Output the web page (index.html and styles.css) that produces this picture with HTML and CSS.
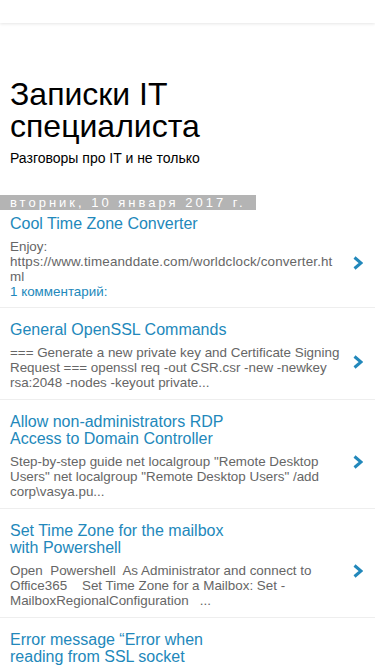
FILE: index.html
```html
<!DOCTYPE html>
<html lang="ru">

<head>
    <meta charset="UTF-8">
    <meta name="viewport" content="width=device-width, initial-scale=1.0">
    <title>Записки IT специалиста</title>

    <link rel="stylesheet" href="styles.css">
</head>

<body>

    <div class="topbar"></div>

    <header class="blog-header">
        <h1>Записки IT специалиста</h1>
        <p class="description">Разговоры про IT и не только</p>
    </header>

    <div class="date-header"><span>вторник, 10 января 2017 г.</span></div>

    <div class="post first">
        <div class="post-body">
            <h3 class="post-title">Cool Time Zone Converter</h3>
            <div class="snippet">Enjoy:<br><span class="url">https://www.timeanddate.com/worldclock/converter.html</span></div>
            <div class="comments">1 комментарий:</div>
        </div>
        <div class="arrow"><svg width="10" height="14" viewBox="0 0 10 14"><polyline points="1.5,1.5 8,7 1.5,12.5" fill="none" stroke="#2288bb" stroke-width="3"/></svg></div>
    </div>

    <div class="post">
        <div class="post-body">
            <h3 class="post-title">General OpenSSL Commands</h3>
            <div class="snippet">=== Generate a new private key and Certificate Signing Request === openssl req -out CSR.csr -new -newkey rsa:2048 -nodes -keyout private...</div>
        </div>
        <div class="arrow"><svg width="10" height="14" viewBox="0 0 10 14"><polyline points="1.5,1.5 8,7 1.5,12.5" fill="none" stroke="#2288bb" stroke-width="3"/></svg></div>
    </div>

    <div class="post">
        <div class="post-body">
            <h3 class="post-title">Allow non-administrators RDP Access to Domain Controller</h3>
            <div class="snippet">Step-by-step guide net localgroup "Remote Desktop Users" net localgroup "Remote Desktop Users" /add corp\vasya.pu...</div>
        </div>
        <div class="arrow"><svg width="10" height="14" viewBox="0 0 10 14"><polyline points="1.5,1.5 8,7 1.5,12.5" fill="none" stroke="#2288bb" stroke-width="3"/></svg></div>
    </div>

    <div class="post">
        <div class="post-body">
            <h3 class="post-title">Set Time Zone for the mailbox with Powershell</h3>
            <div class="snippet">Open&nbsp; Powershell&nbsp; As Administrator and connect to Office365 &nbsp;&nbsp; Set Time Zone for a Mailbox: Set -MailboxRegionalConfiguration &nbsp; ...</div>
        </div>
        <div class="arrow"><svg width="10" height="14" viewBox="0 0 10 14"><polyline points="1.5,1.5 8,7 1.5,12.5" fill="none" stroke="#2288bb" stroke-width="3"/></svg></div>
    </div>

    <div class="post">
        <div class="post-body">
            <h3 class="post-title">Error message “Error when reading from SSL socket connection” when sending mail</h3>
        </div>
    </div>

</body>

</html>
```

FILE: styles.css
```css
body {
    margin: 0;
    background-color: white;
    font-family: "Liberation Sans", Arial, sans-serif;
    color: #222;
}

.topbar {
    height: 23px;
    background-color: white;
    box-shadow: 0 1px 3px rgba(0, 0, 0, 0.1);
}

.blog-header {
    padding: 55px 10px 0;
}

h1 {
    margin: 0;
    max-width: 260px;
    font-size: 32px;
    font-weight: normal;
    line-height: 32px;
    color: black;
}

.description {
    margin: 8px 0 0;
    font-size: 14px;
    line-height: 16px;
    color: black;
}

.date-header {
    margin-top: 27px;
    height: 15px;
}

.date-header span {
    display: inline-block;
    background-color: #b4b4b4;
    color: white;
    font-size: 13px;
    line-height: 15px;
    letter-spacing: 3px;
    padding: 0 10px;
}

.post {
    display: flex;
    align-items: center;
    padding: 13px 0 9px 10px;
    border-bottom: 1px solid #eee;
}

.post.first {
    padding-top: 7px;
    padding-bottom: 8px;
}

.post-body {
    width: 333px;
}

.post-title {
    margin: 0 0 7px;
    max-width: 240px;
    font-size: 16px;
    line-height: 17px;
    font-weight: normal;
    color: #2288bb;
}

.snippet {
    font-size: 13.4px;
    line-height: 15px;
    color: #666;
    overflow-wrap: break-word;
}

.url {
    letter-spacing: 0.15px;
}

.comments {
    font-size: 13.4px;
    line-height: 15px;
    color: #2288bb;
}

.arrow {
    display: flex;
    padding-left: 10px;
    margin-top: 12px;
}
```
